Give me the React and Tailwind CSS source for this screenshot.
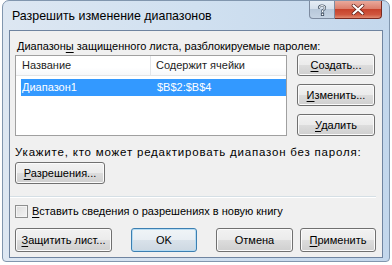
const font = "font-['Segoe_UI','Liberation_Sans',sans-serif]"

function Btn({ children, w, h = 'h-[22px]', isDefault = false, className = '' }) {
  return (
    <div
      className={`${w} ${h} ${className} flex items-center justify-center rounded-[3px] border text-[11px] text-black ${
        isDefault
          ? 'border-[#3c7fb1] bg-[linear-gradient(#f0f4f7_0%,#e8eef3_50%,#d9e2ea_50%,#cdd8e2_100%)] shadow-[inset_0_0_0_1px_#b6dcf3]'
          : 'border-[#707070] bg-[linear-gradient(#f2f2f2_0%,#ebebeb_50%,#dddddd_50%,#cfcfcf_100%)] shadow-[inset_0_0_0_1px_#fbfbfb]'
      }`}
    >
      {children}
    </div>
  )
}

const U = ({ children }) => <span className="underline underline-offset-[2px]">{children}</span>

export default function App() {
  return (
    <div className={`w-[392px] h-[265px] bg-white pl-[2px] ${font}`}>
      <div className="w-[388px] h-[262px] flex flex-col rounded-t-[7px] rounded-b-[4px] border border-[#8196ae] bg-[linear-gradient(90deg,#dde7f2_0%,#d0e0f0_50%,#c3d7ec_100%)] px-[6px] pb-[3px]">
        {/* title bar */}
        <div className="h-[29px] flex items-start justify-between">
          <div className="pt-[6px] pl-[3px] text-[12.4px] leading-[18px] text-black">Разрешить изменение диапазонов</div>
          <div className="flex mr-[1px]">
            <div className="w-[26px] h-[18px] flex items-center justify-center rounded-bl-[4px] border border-t-0 border-[#7d8ba0] bg-[linear-gradient(#e6edf5_0%,#d3deeb_50%,#b8c8da_50%,#c5d3e3_100%)]">
              <svg width="10" height="12" viewBox="0 0 10 12">
                <path d="M2 4 Q2 1.5 5 1.5 Q8 1.5 8 4 Q8 5.5 5.5 6.5 L5.5 8" fill="none" stroke="#3b4b5e" strokeWidth="2.2" strokeLinecap="round" />
                <path d="M2 4 Q2 1.5 5 1.5 Q8 1.5 8 4 Q8 5.5 5.5 6.5 L5.5 8" fill="none" stroke="#ffffff" strokeWidth="1" strokeLinecap="round" />
                <rect x="4.3" y="9.2" width="2.4" height="2.4" fill="#ffffff" stroke="#3b4b5e" strokeWidth="0.8" />
              </svg>
            </div>
            <div className="w-[47px] h-[18px] flex items-center justify-center rounded-br-[4px] border border-t-0 border-l-0 border-[#7a2a21] bg-[linear-gradient(#e9a99b_0%,#dc7f6c_45%,#c7432c_50%,#d0563e_80%,#e08a70_100%)]">
              <svg width="14" height="11" viewBox="0 0 14 11">
                <path d="M2.5 1.5 L11.5 9.5 M11.5 1.5 L2.5 9.5" stroke="#5a1a12" strokeWidth="3.6" strokeLinecap="round" />
                <path d="M2.5 1.5 L11.5 9.5 M11.5 1.5 L2.5 9.5" stroke="#ffffff" strokeWidth="2.2" strokeLinecap="round" />
              </svg>
            </div>
          </div>
        </div>

        {/* client area */}
        <div className="flex-1 flex flex-col border border-[#6f84a0] bg-[#f0f0f0] pl-[5px] text-[11px] text-black">
          <div className="mt-[7px] h-[16px] leading-[16px] pl-[2px]">
            Диапазон<U>ы</U> защищенного листа, разблокируемые паролем:
          </div>

          <div className="flex">
            <div className="mt-[1px] w-[272px] h-[81px] border border-[#a0a0a0] bg-white">
              <div className="h-[20px] flex border-b border-[#e5e5e5] bg-[linear-gradient(#ffffff_0%,#ffffff_60%,#f7f8fa_100%)] text-[#1e1e1e]">
                <div className="w-[135px] pl-[6px] flex items-center border-r border-[#e3e5e8]">Название</div>
                <div className="pl-[5px] flex items-center">Содержит ячейки</div>
              </div>
              <div className="ml-[5px] mt-[3px] h-[17px] flex bg-[#3399ff] text-white">
                <div className="w-[136px] pl-[1px] flex items-center">Диапазон1</div>
                <div className="flex items-center">$B$2:$B$4</div>
              </div>
            </div>
            <div className="ml-[10px] flex flex-col gap-[8px]">
              <Btn w="w-[78px]"><span><U>С</U>оздать...</span></Btn>
              <Btn w="w-[78px]"><span><U>И</U>зменить...</span></Btn>
              <Btn w="w-[78px]"><span><U>У</U>далить</span></Btn>
            </div>
          </div>

          <div className="mt-[8px] h-[16px] leading-[16px] text-[11.5px] tracking-[0.8px]">
            Укажите, кто может редактировать диапазон без пароля:
          </div>
          <Btn w="w-[90px]" className="mt-[2px]"><span><U>Р</U>азрешения...</span></Btn>

          <div className="mt-[12px] -ml-[5px] w-[366px] h-[2px] border-t border-[#d5dfe5] border-b border-b-white" />

          <div className="mt-[6px] h-[14px] flex items-center">
            <div className="w-[13px] h-[13px] border border-[#8e8f8f] bg-[linear-gradient(135deg,#dcdcdc_0%,#f4f4f4_100%)] shadow-[inset_0_0_0_1px_#f4f4f4]" />
            <div className="ml-[4px]"><U>В</U>ставить сведения о разрешениях в новую книгу</div>
          </div>

          <div className="mt-[10px] flex">
            <Btn w="w-[97px]" h="h-[24px]"><span><U>З</U>ащитить лист...</span></Btn>
            <Btn w="w-[66px]" h="h-[24px]" isDefault className="ml-[19px]">OK</Btn>
            <Btn w="w-[77px]" h="h-[24px]" className="ml-[19px]">Отмена</Btn>
            <Btn w="w-[76px]" h="h-[24px]" className="ml-[7px]"><span><U>П</U>рименить</span></Btn>
          </div>
        </div>
      </div>
    </div>
  )
}
